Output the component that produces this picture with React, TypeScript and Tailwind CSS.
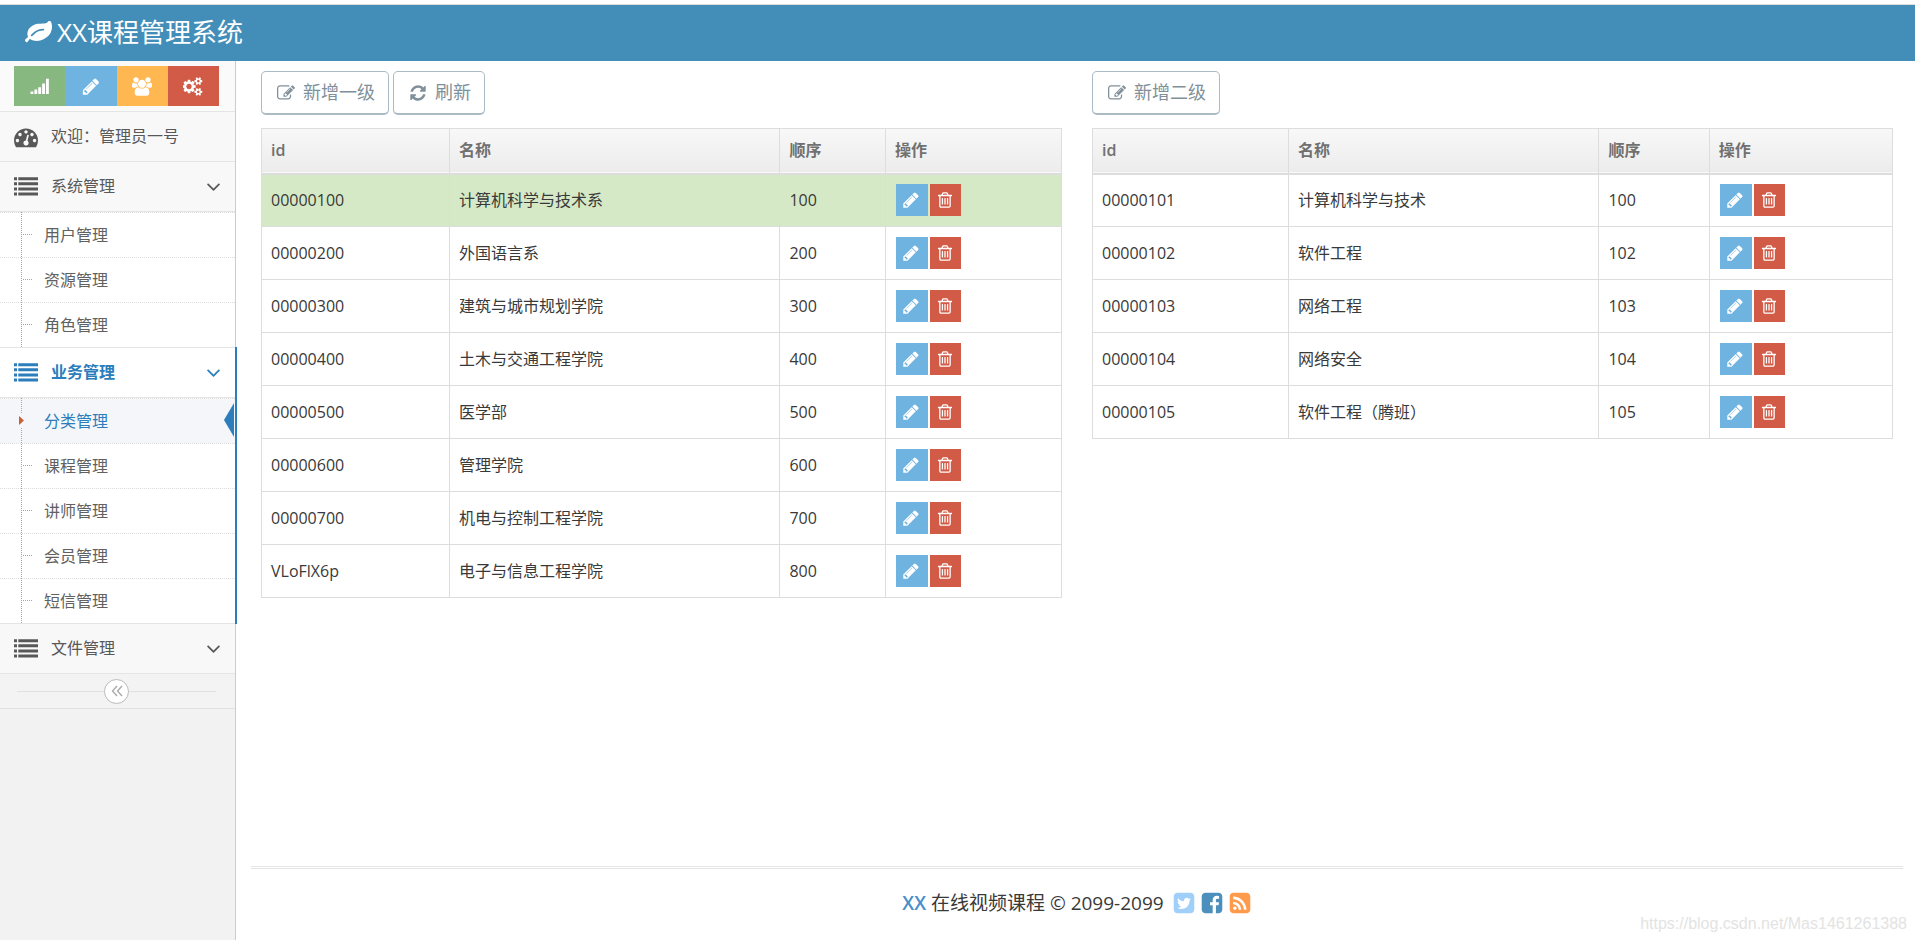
import { useState } from 'react'
import type { ReactNode } from 'react'
import clsx from 'clsx'

type IconProps = { className?: string }

const ICONS = {
  leaf: 'M1280 704q0-26-19-45t-45-19q-172 0-318 49.5t-259.5 134-235.5 219.5q-19 21-19 45 0 26 19 45t45 19q24 0 45-19 27-24 74-71t67-66q137-124 268.5-176t313.5-52q26 0 45-19t19-45zm512-198q0 95-20 193-46 224-184.5 383t-357.5 268q-214 108-438 108-148 0-286-47-15-5-88-42t-96-37q-16 0-39.5 32t-45 70-52.5 70-60 32q-43 0-63.5-17.5t-45.5-59.5q-2-4-6-11t-5.5-10-3-9.5-1.5-13.5q0-35 31-73.5t68-65.5 68-56 31-48q0-4-14-38t-16-44q-9-51-9-104 0-115 43.5-220t119-184.5 170.5-139 204-95.5q55-18 145-25.5t179.5-9 178.5-6 163.5-24 113.5-56.5l29.5-29.5 29.5-28 27-20 36.5-16 43.5-4.5q39 0 70.5 46t47.500 112 24 124 8 96z',
  pencil: 'M491 1536l91-91-235-235-91 91v107h128v128h107zm523-928q0-22-22-22-10 0-17 7l-542 542q-7 7-7 17 0 22 22 22 10 0 17-7l542-542q7-7 7-17zm-54-192l416 416-832 832h-416v-416zm683 96q0 53-37 90l-166 166-416-416 166-165q36-38 90-38 53 0 91 38l235 234q37 39 37 91z',
  trash: 'M704 736v576q0 14-9 23t-23 9h-64q-14 0-23-9t-9-23v-576q0-14 9-23t23-9h64q14 0 23 9t9 23zm256 0v576q0 14-9 23t-23 9h-64q-14 0-23-9t-9-23v-576q0-14 9-23t23-9h64q14 0 23 9t9 23zm256 0v576q0 14-9 23t-23 9h-64q-14 0-23-9t-9-23v-576q0-14 9-23t23-9h64q14 0 23 9t9 23zm128 724v-948h-896v948q0 22 7 40.5t14.5 27 10.5 8.5h832q3 0 10.5-8.5t14.5-27 7-40.5zm-672-1076h448l-48-117q-7-9-17-11h-317q-10 2-17 11zm928 32v64q0 14-9 23t-23 9h-96v948q0 83-47 143.5t-113 60.5h-832q-66 0-113-58.5t-47-141.5v-952h-96q-14 0-23-9t-9-23v-64q0-14 9-23t23-9h309l70-167q15-37 54-63t79-26h320q40 0 79 26t54 63l70 167h309q14 0 23 9t9 23z',
  edit: 'M888 1184l116-116-152-152-116 116v56h96v96h56zm440-720q-16-16-33 1l-350 350q-17 17-1 33t33-1l350-350q17-17 1-33zm80 594v190q0 119-84.5 203.5t-203.5 84.5h-832q-119 0-203.5-84.5t-84.5-203.5v-832q0-119 84.5-203.5t203.5-84.5h832q63 0 117 25 15 7 18 23 3 17-9 29l-49 49q-14 14-32 8-23-6-45-6h-832q-66 0-113 47t-47 113v832q0 66 47 113t113 47h832q66 0 113-47t47-113v-126q0-13 9-22l64-64q15-15 35-7t20 29zm-96-738l288 288-672 672h-288v-288zm444 132l-92 92-288-288 92-92q28-28 68-28t68 28l152 152q28 28 28 68t-28 68z',
  refresh: 'M1639 1056q0 5-1 7-64 268-268 434.5t-478 166.5q-146 0-282.5-55t-243.5-157l-129 129q-19 19-45 19t-45-19-19-45v-448q0-26 19-45t45-19h448q26 0 45 19t19 45-19 45l-137 137q71 66 161 102t187 36q134 0 250-65t186-179q11-17 53-117 8-23 30-23h192q13 0 22.5 9.5t9.5 22.5zm25-800v448q0 26-19 45t-45 19h-448q-26 0-45-19t-19-45 19-45l138-138q-148-137-349-137-134 0-250 65t-186 179q-11 17-53 117-8 23-30 23h-199q-13 0-22.5-9.5t-9.5-22.5v-7q65-268 270-434.5t480-166.5q146 0 284 55.5t245 156.5l130-129q19-19 45-19t45 19 19 45z',
  tachometer: 'M384 1152q0-53-37.5-90.5t-90.5-37.5-90.5 37.5-37.5 90.5 37.5 90.5 90.5 37.5 90.5-37.5 37.5-90.5zm192-448q0-53-37.5-90.5t-90.5-37.5-90.5 37.5-37.5 90.5 37.5 90.5 90.5 37.5 90.5-37.5 37.5-90.5zm428 481l101-382q6-26-7.5-48.5t-38.5-29.5-48 6.5-30 39.5l-101 382q-60 5-107 43.5t-63 98.5q-20 77 20 146t117 89 146-20 89-117q16-60-6-117t-72-91zm660-33q0-53-37.5-90.5t-90.5-37.5-90.5 37.5-37.5 90.5 37.5 90.5 90.5 37.5 90.5-37.5 37.5-90.5zm-640-640q0-53-37.5-90.5t-90.5-37.5-90.5 37.5-37.5 90.5 37.5 90.5 90.5 37.5 90.5-37.5 37.5-90.5zm448 192q0-53-37.5-90.5t-90.5-37.5-90.5 37.5-37.5 90.5 37.5 90.5 90.5 37.5 90.5-37.5 37.5-90.5zm320 448q0 261-141 483-19 29-54 29h-1402q-35 0-54-29-141-221-141-483 0-182 71-348t191-286 286-191 348-71 348 71 286 191 191 286 71 348z',
  list: 'M0 1312h224v224h-224zM0 928h224v224h-224zM0 544h224v224h-224zM0 160h224v224h-224zM320 1312h1472v224h-1472zM320 928h1472v224h-1472zM320 544h1472v224h-1472zM320 160h1472v224h-1472z',
  signal: 'M0 1370h270v230h-270zM365 1180h270v420h-270zM730 960h270v640h-270zM1095 620h270v980h-270zM1460 160h270v1440h-270z',
  users: 'M593 896q-162 5-265 128h-134q-82 0-138-40.5t-56-118.5q0-353 124-353 6 0 43.5 21t97.5 42.5 119 21.5q67 0 133-23-5 37-5 66 0 139 81 256zm1071 637q0 120-73 189.5t-194 69.5h-874q-121 0-194-69.5t-73-189.5q0-53 3.5-103.5t14-109 26.5-108.5 43-97.5 62-81 85.5-53.5 111.5-20q10 0 43 21.5t73 48 107 48 135 21.5 135-21.5 107-48 73-48 43-21.5q61 0 111.5 20t85.5 53.5 62 81 43 97.5 26.5 108.5 14 109 3.5 103.5zm-1024-1277q0 106-75 181t-181 75-181-75-75-181 75-181 181-75 181 75 75 181zm704 384q0 159-112.5 271.5t-271.5 112.5-271.5-112.5-112.5-271.5 112.5-271.5 271.5-112.5 271.5 112.5 112.5 271.5zm576 225q0 78-56 118.5t-138 40.5h-134q-103-123-265-128 81-117 81-256 0-29-5-66 66 23 133 23 59 0 119-21.5t97.5-42.5 43.5-21q124 0 124 353zm-128-609q0 106-75 181t-181 75-181-75-75-181 75-181 181-75 181 75 75 181z',
  cogs: 'M832 896q0-106-75-181t-181-75-181 75-75 181 75 181 181 75 181-75 75-181zm768 512q0-52-38-90t-90-38-90 38-38 90q0 53 37.5 90.5t90.5 37.5 90.5-37.5 37.5-90.5zm0-1024q0-52-38-90t-90-38-90 38-38 90q0 53 37.5 90.5t90.5 37.5 90.5-37.5 37.5-90.5zm-384 421v185q0 10-7 19.5t-16 10.5l-155 24q-11 35-32 76 34 48 90 115 7 11 7 20 0 12-7 19-23 30-82.5 89.5t-78.5 59.5q-11 0-21-7l-115-90q-37 19-77 31-11 108-23 155-7 24-30 24h-186q-11 0-20-7.5t-10-17.5l-23-153q-34-10-75-31l-118 89q-7 7-20 7-11 0-21-8-144-133-144-160 0-9 7-19 10-14 41-53t47-61q-23-44-35-82l-152-24q-10-1-17-9.5t-7-19.5v-185q0-10 7-19.5t16-10.5l155-24q11-35 32-76-34-48-90-115-7-11-7-20 0-12 7-20 22-30 82-89t79-59q11 0 21 7l115 90q34-18 77-32 11-108 23-154 7-24 30-24h186q11 0 20 7.5t10 17.5l23 153q34 10 75 31l118-89q8-7 20-7 11 0 21 8 144 133 144 160 0 8-7 19-12 16-42 54t-45 60q23 48 34 82l152 23q10 2 17 10.5t7 19.5zm640 533v140q0 16-149 31-12 27-30 52 51 113 51 138 0 4-4 7-122 71-124 71-8 0-46-47t-52-68q-20 2-30 2t-30-2q-14 21-52 68t-46 47q-2 0-124-71-4-3-4-7 0-25 51-138-18-25-30-52-149-15-149-31v-140q0-16 149-31 13-29 30-52-51-113-51-138 0-4 4-7 4-2 35-20t59-34 30-16q8 0 46 46.5t52 67.5q20-2 30-2t30 2q51-71 92-112l6-2q4 0 124 70 4 3 4 7 0 25-51 138 17 23 30 52 149 15 149 31zm0-1024v140q0 16-149 31-12 27-30 52 51 113 51 138 0 4-4 7-122 71-124 71-8 0-46-47t-52-68q-20 2-30 2t-30-2q-14 21-52 68t-46 47q-2 0-124-71-4-3-4-7 0-25 51-138-18-25-30-52-149-15-149-31v-140q0-16 149-31 13-29 30-52-51-113-51-138 0-4 4-7 4-2 35-20t59-34 30-16q8 0 46 46.5t52 67.5q20-2 30-2t30 2q51-71 92-112l6-2q4 0 124 70 4 3 4 7 0 25-51 138 17 23 30 52 149 15 149 31z',
  angleDown: 'M1395 736q0 13-10 23l-466 466q-10 10-23 10t-23-10l-466-466q-10-10-10-23t10-23l50-50q10-10 23-10t23 10l393 393 393-393q10-10 23-10t23 10l50 50q10 10 10 23z',
  twitter: 'M1408 610q-56 25-121 34 68-40 93-117-65 38-134 51-61-66-153-66-87 0-148.5 61.5t-61.5 148.5q0 29 5 48-129-7-242-65t-192-155q-29 50-29 106 0 114 91 175-47-1-100-26v2q0 75 50 133.5t123 72.5q-29 8-51 8-13 0-39-4 21 63 74.5 104t121.5 42q-116 90-261 90-26 0-50-3 148 94 322 94 112 0 210-35.5t168-95 120.5-137 75-162 24.5-168.5q0-18-1-27 63-45 105-109zm256-194v960q0 119-84.5 203.5t-203.5 84.5h-960q-119 0-203.5-84.5t-84.5-203.5v-960q0-119 84.5-203.5t203.5-84.5h960q119 0 203.5 84.5t84.5 203.5z',
  facebook: 'M1376 128q119 0 203.5 84.5t84.5 203.5v960q0 119-84.5 203.5t-203.5 84.5h-188v-595h199l30-232h-229v-148q0-56 23.5-84t91.5-28l122-1v-207q-63-9-178-9-136 0-217.5 80t-81.5 226v171h-200v232h200v595h-532q-119 0-203.5-84.5t-84.5-203.5v-960q0-119 84.5-203.5t203.5-84.5h960z',
  rss: 'M640 1280q0-53-37.5-90.5t-90.5-37.5-90.5 37.5-37.5 90.5 37.5 90.5 90.5 37.5 90.5-37.5 37.5-90.5zm351 94q-13-232-177-396t-396-177q-14-1-24 9t-10 23v128q0 13 8.5 22t21.5 10q154 11 264 121t121 264q1 13 10 21.5t22 8.5h128q13 0 23-10t9-24zm384 1q-5-154-56-297.5t-139.5-260-205-205-260-139.5-297.5-56q-14-1-23 9-10 10-10 23v128q0 13 9 22t22 10q204 7 378 111.5t278.5 278.5 111.5 378q1 13 10 22t22 9h128q13 0 23-10 11-9 9-23zm289-959v960q0 119-84.5 203.5t-203.5 84.5h-960q-119 0-203.5-84.5t-84.5-203.5v-960q0-119 84.5-203.5t203.5-84.5h960q119 0 203.5 84.5t84.5 203.5z',
}

function Icon({ name, wide, className }: IconProps & { name: keyof typeof ICONS; wide?: boolean }) {
  return (
    <svg viewBox={wide ? '0 0 1920 1792' : '0 0 1792 1792'} fill="currentColor" aria-hidden="true" className={clsx('shrink-0', className)}>
      <path d={ICONS[name]} />
    </svg>
  )
}

type Row = { id: string; name: string; sort: number }

const LEVEL_ONE: Row[] = [
  { id: '00000100', name: '计算机科学与技术系', sort: 100 },
  { id: '00000200', name: '外国语言系', sort: 200 },
  { id: '00000300', name: '建筑与城市规划学院', sort: 300 },
  { id: '00000400', name: '土木与交通工程学院', sort: 400 },
  { id: '00000500', name: '医学部', sort: 500 },
  { id: '00000600', name: '管理学院', sort: 600 },
  { id: '00000700', name: '机电与控制工程学院', sort: 700 },
  { id: 'VLoFlX6p', name: '电子与信息工程学院', sort: 800 },
]

const LEVEL_TWO: Row[] = [
  { id: '00000101', name: '计算机科学与技术', sort: 100 },
  { id: '00000102', name: '软件工程', sort: 102 },
  { id: '00000103', name: '网络工程', sort: 103 },
  { id: '00000104', name: '网络安全', sort: 104 },
  { id: '00000105', name: '软件工程（腾班）', sort: 105 },
]

const SHORTCUTS = [
  { icon: 'signal', label: '统计', color: 'bg-[#87b87f]' },
  { icon: 'pencil', label: '编辑', color: 'bg-[#6fb3e0]' },
  { icon: 'users', label: '用户', color: 'bg-[#ffb752]' },
  { icon: 'cogs', label: '设置', color: 'bg-[#d15b47]' },
] as const

function OutlineButton({ icon, children }: { icon: 'edit' | 'refresh'; children: ReactNode }) {
  return (
    <button className="flex h-11 items-center gap-2 rounded-[5px] border border-b-2 border-[#abbac3] bg-white pr-[13px] pl-[15px] text-[18px] text-[#80909a]">
      <Icon name={icon} className="size-[18px]" />
      <span>{children}</span>
    </button>
  )
}

function CategoryTable({ rows, cols, selected, onSelect }: { rows: Row[]; cols: string[]; selected?: string; onSelect?: (id: string) => void }) {
  return (
    <table className="w-full table-fixed border-collapse border border-[#ddd] text-left text-[16px] leading-6 text-[#393939]">
      <colgroup>
        {cols.map((c, i) => (
          <col key={i} className={c} />
        ))}
      </colgroup>
      <thead>
        <tr className="h-[45px] border-b-2 border-[#ddd] bg-linear-to-b from-[#f8f8f8] to-[#ececec] text-[#707070]">
          {['id', '名称', '顺序', '操作'].map((h) => (
            <th key={h} className="border-r border-[#ddd] px-[9px] pb-[2px] font-semibold last:border-r-0">{h}</th>
          ))}
        </tr>
      </thead>
      <tbody>
        {rows.map((row) => (
          <tr key={row.id} onClick={() => onSelect?.(row.id)} className={clsx('h-[53px]', row.id === selected && 'bg-[#d6e9c6]')}>
            <td className="border border-[#ddd] px-[9px]">{row.id}</td>
            <td className="border border-[#ddd] px-[9px]">{row.name}</td>
            <td className="border border-[#ddd] px-[9px]">{row.sort}</td>
            <td className="border border-[#ddd] px-[10px]">
              <div className="flex gap-[2px]">
                <button aria-label="编辑" className="flex size-8 items-center justify-center bg-[#6fb3e0] pr-[2px] text-white">
                  <Icon name="pencil" className="size-[18px]" />
                </button>
                <button aria-label="删除" className="flex h-8 w-[31px] items-center justify-center bg-[#d15b47] pr-px text-white">
                  <Icon name="trash" className="size-[18px]" />
                </button>
              </div>
            </td>
          </tr>
        ))}
      </tbody>
    </table>
  )
}

function MenuGroup({ title, items = [], active, current }: { title: string; items?: string[]; active?: boolean; current?: string }) {
  return (
    <li className={clsx('relative', active && 'text-[#2b7dbc]')}>
      <a
        href="#"
        className={clsx(
          'flex h-[50px] items-center gap-[13px] border-b border-[#e5e5e5] pr-[10px] pl-[14px]',
          active ? 'bg-white font-bold' : 'bg-[#f8f8f8] text-[#585858]'
        )}
      >
        <Icon name="list" className="size-6" />
        <span className="flex-1 pb-[2px]">{title}</span>
        <Icon name="angleDown" className="size-[23px]" />
      </a>
      {items.length > 0 && (
        <ul className="relative border-b border-[#e5e5e5] bg-white">
          <li aria-hidden="true" className="absolute top-0 bottom-0 left-[21px] z-10 border-l border-dotted border-[#8aaec7]" />
          {items.map((item) => {
            const isCurrent = item === current
            return (
              <li key={item} className="relative border-t border-dotted border-[#dcdcdc] first:border-transparent">
                <a
                  href="#"
                  className={clsx('flex h-11 items-center pb-px pl-11', isCurrent ? 'bg-[#f4f6fa] text-[#2b7dbc]' : 'text-[#616161]')}
                >
                  {item}
                </a>
                {isCurrent ? (
                  <>
                    <svg viewBox="0 0 9 15" aria-hidden="true" className="absolute top-[14px] left-[17px] z-20 h-[15px] w-[9px]">
                      <rect width="9" height="15" fill="#f4f6fa" />
                      <path d="M2 3l5 4.5L2 12z" fill="#c86139" />
                    </svg>
                    <svg viewBox="0 0 10 34" aria-hidden="true" className="absolute top-[4px] right-px h-[34px] w-[10px]">
                      <path d="M10 0v34L0 17z" fill="#2b7dbc" />
                    </svg>
                  </>
                ) : (
                  <span aria-hidden="true" className="absolute top-[21px] left-[23px] w-[9px] border-t border-dotted border-[#8aaec7]" />
                )}
              </li>
            )
          })}
        </ul>
      )}
      {active && <span aria-hidden="true" className="absolute top-[-1px] -right-[2px] bottom-0 w-[2px] bg-[#2b7dbc]" />}
    </li>
  )
}

function Sidebar() {
  return (
    <aside className="w-[236px] shrink-0 border-r border-[#ccc] bg-[#f2f2f2]">
      <div className="flex border-b border-[#e5e5e5] bg-[#fafafa] py-[5px] pr-4 pl-[14px]">
        {SHORTCUTS.map((s) => (
          <button key={s.icon} aria-label={s.label} className={clsx('flex h-10 flex-1 items-center justify-center text-white', s.color)}>
            <Icon name={s.icon} wide={s.icon === 'users' || s.icon === 'cogs'} className="h-[19px] w-5" />
          </button>
        ))}
      </div>
      <nav className="text-[16px]">
        <ul>
          <li>
            <a href="#" className="flex h-[50px] items-center gap-[13px] border-b border-[#e5e5e5] bg-[#f8f8f8] pl-[14px] text-[#585858]">
              <Icon name="tachometer" className="size-6" />
              <span className="pb-[2px]">欢迎：管理员一号</span>
            </a>
          </li>
          <MenuGroup title="系统管理" items={['用户管理', '资源管理', '角色管理']} />
          <MenuGroup title="业务管理" active current="分类管理" items={['分类管理', '课程管理', '讲师管理', '会员管理', '短信管理']} />
          <MenuGroup title="文件管理" />
        </ul>
      </nav>
      <div className="flex h-[35px] items-center border-b border-[#e0e0e0] bg-[#f3f3f3] pr-[19px] pl-[17px]">
        <span className="h-px flex-1 bg-[#e0e0e0]" />
        <button aria-label="收起" className="flex size-[25px] items-center justify-center rounded-full border border-[#bbb] bg-white text-[#aaa]">
          <svg viewBox="0 0 12 12" fill="none" stroke="currentColor" strokeWidth="1.4" className="size-3">
            <path d="M6 1L1.500 6L6 11M11 1L6.500 6L11 11" />
          </svg>
        </button>
        <span className="h-px flex-1 bg-[#e0e0e0]" />
      </div>
    </aside>
  )
}

export default function App() {
  const [selected, setSelected] = useState('00000100')

  return (
    <div className="flex min-h-screen flex-col bg-white pt-1 font-['Open_Sans','Noto_Sans_CJK_SC',sans-serif]">
      <header className="flex h-[57px] items-center border-t border-[#ddd] bg-[#438eb9] pl-[25px] text-white">
        <a href="#" className="flex items-center gap-[5px] pb-[2px] text-[26px] leading-8">
          <Icon name="leaf" className="size-[27px]" />
          <span>XX课程管理系统</span>
        </a>
      </header>

      <div className="flex flex-1">
        <Sidebar />

        <div className="flex min-w-0 flex-1 flex-col">
          <main className="grid flex-1 grid-cols-2 content-start gap-[30px] pt-[10px] pr-[22px] pl-[25px]">
            <section>
              <div className="mb-[13px] flex gap-1">
                <OutlineButton icon="edit">新增一级</OutlineButton>
                <OutlineButton icon="refresh">刷新</OutlineButton>
              </div>
              <CategoryTable
                rows={LEVEL_ONE}
                cols={['w-[23.5%]', 'w-[41.3%]', 'w-[13.2%]', 'w-[22%]']}
                selected={selected}
                onSelect={setSelected}
              />
            </section>
            <section>
              <div className="mb-[13px] flex gap-1">
                <OutlineButton icon="edit">新增二级</OutlineButton>
              </div>
              <CategoryTable rows={LEVEL_TWO} cols={['w-[24.5%]', 'w-[38.8%]', 'w-[13.8%]', 'w-[22.9%]']} />
            </section>
          </main>

          <footer className="mr-3 ml-[15px] flex h-[74px] items-center justify-center gap-1 border-t-3 border-double border-[#e5e5e5] pb-[3px] text-[19px] text-[#393939]">
            <p className="pr-1">
              <span className="font-semibold text-[#478fca]">XX</span> 在线视频课程 © 2099-2099
            </p>
            <a href="#" aria-label="Twitter" className="text-[#a0cffa]">
              <Icon name="twitter" className="size-6" />
            </a>
            <a href="#" aria-label="Facebook" className="text-[#4c8fbd]">
              <Icon name="facebook" className="size-6" />
            </a>
            <a href="#" aria-label="RSS" className="text-[#ff9a4a]">
              <Icon name="rss" className="size-6" />
            </a>
          </footer>
        </div>
      </div>

      <p className="pointer-events-none absolute right-2 bottom-1 font-['Liberation_Sans',sans-serif] text-[16px] text-[#e3e3e3]">
        https://blog.csdn.net/Mas1461261388
      </p>
    </div>
  )
}
